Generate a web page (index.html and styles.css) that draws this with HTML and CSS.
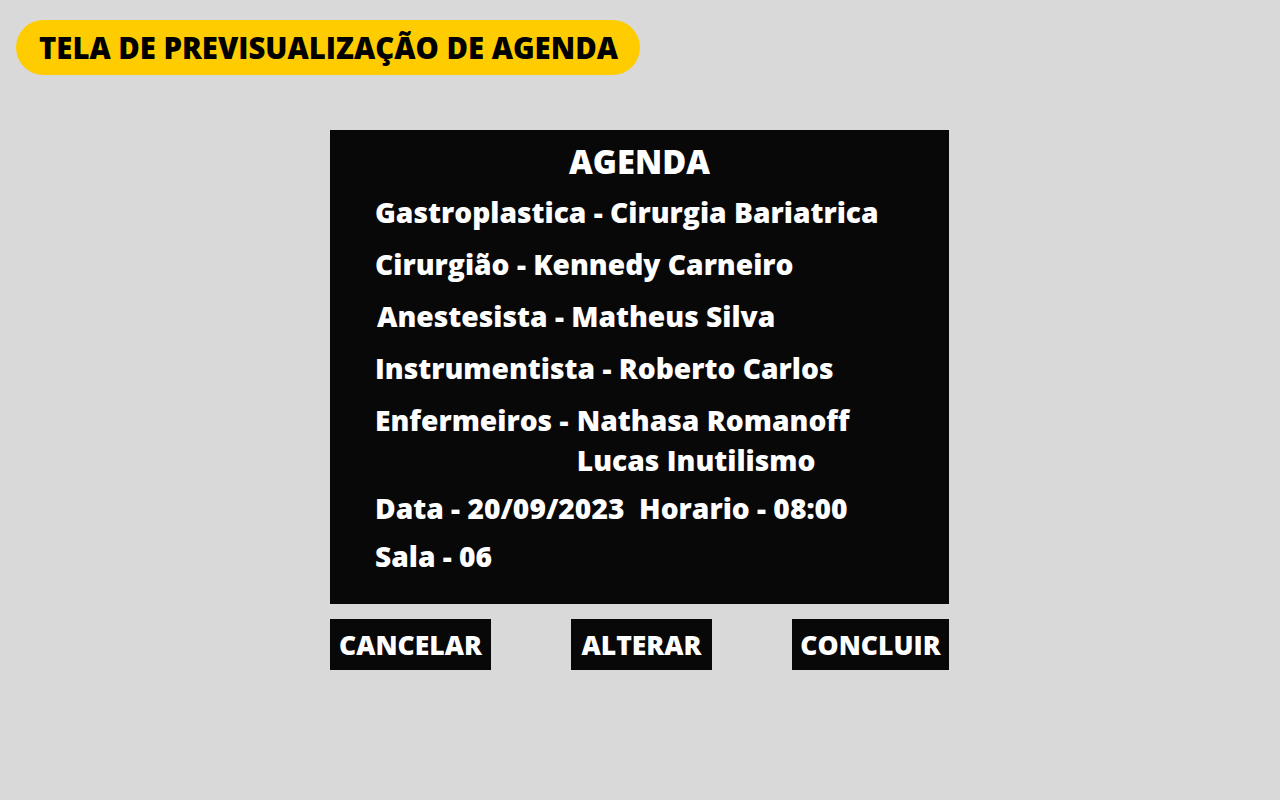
FILE: index.html
```html
<!DOCTYPE html>
<html lang="pt">
<head>
<meta charset="utf-8">
<title>Tela de previsualização de agenda</title>
<link rel="stylesheet" href="styles.css">
</head>
<body>
  <header class="top">
    <div class="pill">TELA DE PREVISUALIZAÇÃO DE AGENDA</div>
  </header>
  <main class="wrap">
    <section class="card">
      <h1 class="title">AGENDA</h1>
      <div class="row">Gastroplastica - Cirurgia Bariatrica</div>
      <div class="row">Cirurgião - Kennedy Carneiro</div>
      <div class="row row-shift">Anestesista - Matheus Silva</div>
      <div class="row">Instrumentista - Roberto Carlos</div>
      <div class="row row-multi">
        <span class="label">Enfermeiros -&nbsp;</span>
        <span class="names"><span>Nathasa Romanoff</span><span>Lucas Inutilismo</span></span>
      </div>
      <div class="row row-tight">Data - 20/09/2023&nbsp; Horario - 08:00</div>
      <div class="row row-tight">Sala - 06</div>
    </section>
    <div class="actions">
      <button class="btn btn-cancel">CANCELAR</button>
      <button class="btn btn-alter">ALTERAR</button>
      <button class="btn btn-done">CONCLUIR</button>
    </div>
  </main>
</body>
</html>
```
FILE: styles.css
```css
* { box-sizing: border-box; }
html, body { margin: 0; padding: 0; }
body {
  background: #d9d9d9;
  font-family: "Open Sans", "Liberation Sans", sans-serif;
  font-weight: 800;
  width: 1280px;
  height: 800px;
  overflow: hidden;
}
.top { padding: 20px 0 0 16px; }
.pill {
  display: inline-flex;
  align-items: center;
  height: 55px;
  padding: 0 22px 0 23px;
  background: #ffcc00;
  border-radius: 28px;
  color: #000;
  font-size: 29.3px;
  font-weight: 800;
  white-space: nowrap;
}
.wrap {
  width: 619px;
  margin: 55px 0 0 330px;
}
.card {
  background: #080808;
  color: #fff;
  padding: 12px 0 28px 45px;
}
.title {
  margin: 0 0 10px -45px;
  text-align: center;
  font-size: 32.7px;
  line-height: 40px;
  font-weight: 800;
}
.row {
  font-size: 28.2px;
  line-height: 40px;
  white-space: nowrap;
  margin-bottom: 12px;
}
.row-shift { padding-left: 2px; }
.row-multi { display: flex; margin-bottom: 8px; }
.label { padding-right: 1px; }
.names { display: flex; flex-direction: column; }
.row-tight { margin-bottom: 8px; }
.row-tight:last-child { margin-bottom: 0; }
.actions {
  display: flex;
  justify-content: space-between;
  margin-top: 15px;
}
.btn {
  height: 51px;
  background: #080808;
  color: #fff;
  border: 0;
  font-family: inherit;
  font-weight: 800;
  font-size: 26.5px;
  padding: 0;
  display: flex;
  align-items: center;
  justify-content: center;
}
.btn-cancel { width: 161px; }
.btn-alter { width: 141px; }
.btn-done { width: 157px; }
```
